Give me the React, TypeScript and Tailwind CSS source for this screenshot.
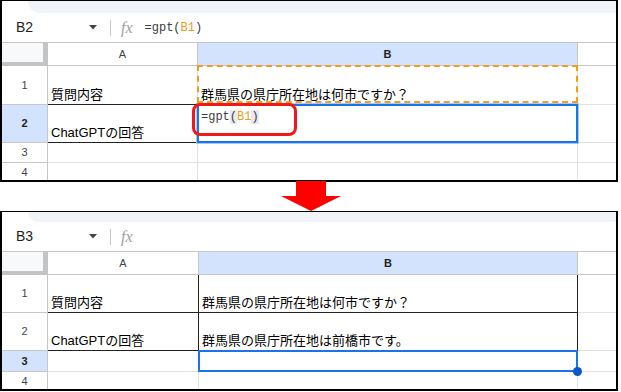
import React from 'react';

const sans = { fontFamily: '"Liberation Sans", "Noto Sans CJK JP", sans-serif' };
const mono = { fontFamily: '"Liberation Mono", "DejaVu Sans Mono", monospace' };

function FormulaBar({ cell, formula }: { cell: string; formula?: boolean }) {
  return (
    <div className="flex h-[29px] items-center" style={sans}>
      <span className="w-[87px] pl-[14px] text-[14px] text-[#1f1f1f]">{cell}</span>
      <svg width="8" height="5" viewBox="0 0 8 5">
        <path d="M0 0h8L4 4.5z" fill="#444" />
      </svg>
      <div className="ml-[13px] h-[16px] w-px bg-[#c7c7c7]" />
      <span
        className="ml-[10px] text-[16px] italic leading-none text-[#a0a0a0]"
        style={{ fontFamily: '"Liberation Serif", serif' }}
      >
        fx
      </span>
      {formula && (
        <span className="ml-[12px] text-[12px] text-[#3c4043]" style={mono}>
          =gpt(<span className="text-[#f09a1a]">B1</span>)
        </span>
      )}
    </div>
  );
}

function Header({ a, b }: { a: number; b: number }) {
  return (
    <div className="flex h-[24px] border-t border-[#c7c7c7] text-[11px] text-[#444]" style={sans}>
      <div className="w-[46px] shrink-0 border-r-[5px] border-b-[4px] border-[#c4c4c4] bg-[#f8f9fa]" />
      <div className="flex shrink-0 items-center justify-center border-r border-b border-[#c7c7c7]" style={{ width: a }}>
        A
      </div>
      <div
        className="flex shrink-0 items-center justify-center border-r border-b border-[#c7c7c7] bg-[#d3e3fd] font-bold text-[#1f1f1f]"
        style={{ width: b }}
      >
        B
      </div>
      <div className="flex-1 border-b border-[#c7c7c7]" />
    </div>
  );
}

function RowHead({ n, active }: { n: number; active?: boolean }) {
  return (
    <div
      className={
        'flex w-[46px] shrink-0 items-center justify-center border-r border-b border-[#c7c7c7] text-[11px] ' +
        (active ? 'bg-[#d3e3fd] font-bold text-[#1f1f1f]' : 'text-[#444]')
      }
      style={sans}
    >
      {n}
    </div>
  );
}

function TopPanel() {
  return (
    <div className="h-[182px] w-[618px] overflow-hidden border-x-2 border-t border-b-2 border-black bg-white">
      <div className="ml-[26px] h-[12px] rounded-bl-[14px] bg-[#f0f4f9]" />
      <FormulaBar cell="B2" formula />
      <Header a={150} b={380} />

      <div className="flex h-[39px]">
        <RowHead n={1} />
        <div className="flex w-[150px] shrink-0 items-end border-r border-b border-b-[#222] border-r-[#e2e2e2] pl-[3px] text-[13px]" style={sans}>
          質問内容
        </div>
        <div className="relative flex w-[380px] shrink-0 items-end border-r border-b border-[#e2e2e2] pl-[3px] text-[13px]" style={sans}>
          群馬県の県庁所在地は何市ですか？
          <div className="absolute -left-px -top-px bottom-[1px] right-[-1px] border-2 border-dashed border-[#f29d1e]" />
        </div>
        <div className="flex-1 border-b border-[#e2e2e2]" />
      </div>

      <div className="flex h-[38px]">
        <RowHead n={2} active />
        <div className="flex w-[150px] shrink-0 items-end border-r border-b border-b-[#222] border-r-[#e2e2e2] pl-[3px] text-[13px]" style={sans}>
          ChatGPTの回答
        </div>
        <div className="relative w-[380px] shrink-0 border-r border-b border-[#e2e2e2]">
          <div className="absolute -left-px -top-px bottom-[-1px] right-[-1px] border-2 border-[#1a73e8] shadow-[0_0_0_1px_#a8c7fa]" />
          <div className="relative pl-[3px] pt-[3px] text-[12px] text-[#3c4043]" style={mono}>
            =<span>gpt</span>
            <span className="bg-[#e8eaed]">(</span>
            <span className="text-[#f09a1a]">B1</span>
            <span className="bg-[#e8eaed]">)</span>
          </div>
          <div className="absolute left-[-6px] top-[-2px] h-[33px] w-[105px] rounded-[8px] border-[3px] border-[#f21818]" />
        </div>
        <div className="flex-1 border-b border-[#e2e2e2]" />
      </div>

      <div className="flex h-[20px]">
        <RowHead n={3} />
        <div className="w-[150px] shrink-0 border-r border-b border-[#e2e2e2]" />
        <div className="w-[380px] shrink-0 border-r border-b border-[#e2e2e2]" />
        <div className="flex-1 border-b border-[#e2e2e2]" />
      </div>

      <div className="flex h-[20px]">
        <RowHead n={4} />
        <div className="w-[150px] shrink-0 border-r border-b border-[#e2e2e2]" />
        <div className="w-[380px] shrink-0 border-r border-b border-[#e2e2e2]" />
        <div className="flex-1 border-b border-[#e2e2e2]" />
      </div>
    </div>
  );
}

function BottomPanel() {
  return (
    <div className="h-[180px] w-[618px] overflow-hidden border-x-2 border-t border-b-2 border-black bg-white">
      <div className="ml-[26px] h-[10px] rounded-bl-[14px] bg-[#f0f4f9]" />
      <FormulaBar cell="B3" />
      <Header a={151} b={379} />

      <div className="flex h-[38px]">
        <RowHead n={1} />
        <div className="flex w-[151px] shrink-0 items-end border-r border-b border-[#222] pl-[3px] text-[13px]" style={sans}>
          質問内容
        </div>
        <div className="flex w-[379px] shrink-0 items-end border-r border-b border-[#222] pl-[3px] text-[13px]" style={sans}>
          群馬県の県庁所在地は何市ですか？
        </div>
        <div className="flex-1 border-b border-[#e2e2e2]" />
      </div>

      <div className="flex h-[38px]">
        <RowHead n={2} />
        <div className="flex w-[151px] shrink-0 items-end border-r border-b border-[#222] pl-[3px] text-[13px]" style={sans}>
          ChatGPTの回答
        </div>
        <div className="flex w-[379px] shrink-0 items-end border-r border-b border-[#222] pl-[3px] text-[13px]" style={sans}>
          群馬県の県庁所在地は前橋市です。
        </div>
        <div className="flex-1 border-b border-[#e2e2e2]" />
      </div>

      <div className="flex h-[21px]">
        <RowHead n={3} active />
        <div className="w-[151px] shrink-0 border-r border-b border-[#e2e2e2]" />
        <div className="relative w-[379px] shrink-0 border-r border-b border-[#e2e2e2]">
          <div className="absolute -left-px -top-px bottom-[-1px] right-[-1px] border-2 border-[#1a73e8]" />
          <div className="absolute bottom-[-5px] right-[-5px] h-[9px] w-[9px] rounded-full bg-[#0b57d0]" />
        </div>
        <div className="flex-1 border-b border-[#e2e2e2]" />
      </div>

      <div className="flex h-[20px]">
        <RowHead n={4} />
        <div className="w-[151px] shrink-0 border-r border-b border-[#e2e2e2]" />
        <div className="w-[379px] shrink-0 border-r border-b border-[#e2e2e2]" />
        <div className="flex-1 border-b border-[#e2e2e2]" />
      </div>
    </div>
  );
}

export default function App() {
  return (
    <div className="h-[392px] w-[621px] bg-white">
      <TopPanel />
      <div className="relative z-10 -mt-[1px] h-[30px] pl-[281px]">
        <svg width="60" height="30" viewBox="0 0 60 30">
          <polygon points="15,0 45,0 45,15 60,15 30,30 0,15 15,15" fill="#ff0000" />
        </svg>
      </div>
      <BottomPanel />
    </div>
  );
}
